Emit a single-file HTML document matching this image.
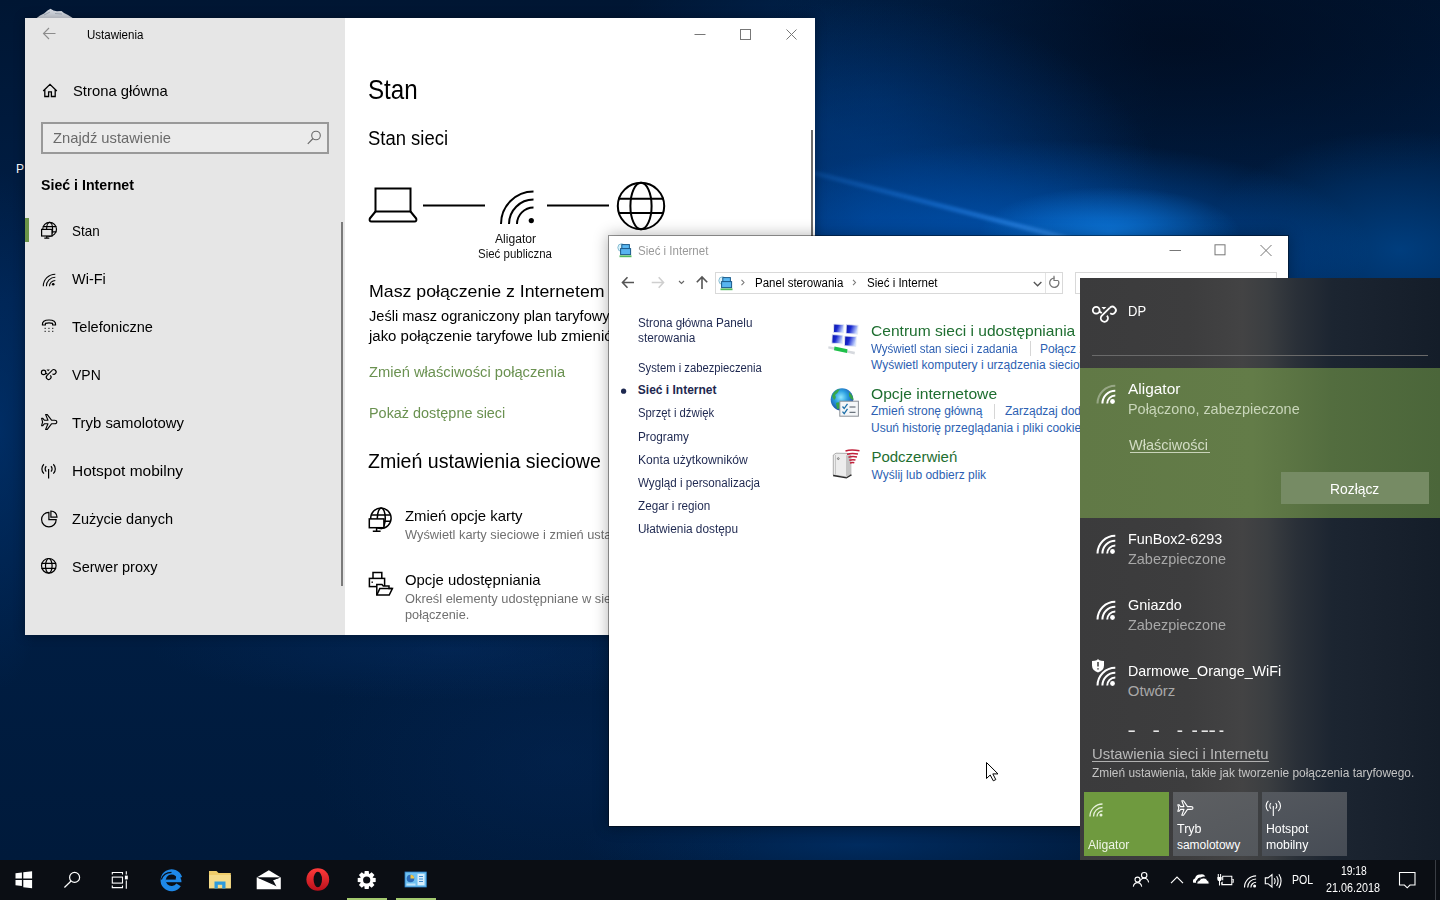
<!DOCTYPE html>
<html><head><meta charset="utf-8"><title>Ustawienia</title>
<style>
*{margin:0;padding:0;box-sizing:border-box}
html,body{width:1440px;height:900px;overflow:hidden}
body{position:relative;font-family:"Liberation Sans",sans-serif;background:#021632}
.t{position:absolute;white-space:nowrap;line-height:1;transform-origin:0 0}
.abs{position:absolute;display:block}
#wall{position:absolute;left:0;top:0;width:1440px;height:860px;overflow:hidden;
 background:
  radial-gradient(ellipse 130px 45px at 1110px 232px, rgba(15,130,235,0.75), rgba(15,130,235,0) 100%),
  radial-gradient(ellipse 330px 110px at 1040px 250px, rgba(0,95,200,0.8), rgba(0,95,200,0) 100%),
  radial-gradient(ellipse 300px 220px at 870px 220px, rgba(0,72,160,0.6), rgba(0,72,160,0) 100%),
  radial-gradient(ellipse 200px 120px at 1400px 250px, rgba(0,78,155,0.65), rgba(0,78,155,0) 100%),
  radial-gradient(ellipse 420px 160px at 1180px 40px, rgba(1,10,28,0.7), rgba(1,10,28,0) 100%),
  radial-gradient(ellipse 280px 220px at 880px 100px, rgba(0,55,120,0.55), rgba(0,55,120,0) 100%),
  radial-gradient(ellipse 300px 50px at 450px 650px, rgba(6,50,110,0.35), rgba(6,50,110,0) 100%),
  radial-gradient(ellipse 250px 150px at 560px 760px, rgba(4,40,90,0.4), rgba(4,40,90,0) 100%),
  radial-gradient(ellipse 60px 260px at 0px 430px, rgba(0,62,135,0.45), rgba(0,62,135,0) 100%),
  radial-gradient(ellipse 280px 45px at 860px 845px, rgba(0,60,130,0.5), rgba(0,60,130,0) 100%),
  linear-gradient(180deg,#001633 0%,#00204a 35%,#001e44 65%,#001a3b 100%);}
#beam1{position:absolute;left:812px;top:170px;width:270px;height:5px;transform:rotate(14.5deg);transform-origin:0 50%;background:linear-gradient(90deg,rgba(40,140,250,.15) 0%,rgba(40,140,250,.4) 50%,rgba(70,160,255,.55) 100%);filter:blur(1.5px)}
#set{position:absolute;left:25px;top:18px;width:790px;height:617px;background:#fff;overflow:hidden;box-shadow:0 0 10px rgba(0,0,0,.35)}
#cp{position:absolute;left:608px;top:235px;width:681px;height:592px;background:#fff;overflow:hidden;border:1px solid rgba(0,0,0,.38);background-clip:padding-box;box-shadow:0 0 14px rgba(0,0,0,.3)}
#fly{position:absolute;left:1080px;top:278px;width:360px;height:582px;overflow:hidden;
 background:linear-gradient(90deg,#3b3b3c 0%,#3d3d3e 30%,#434344 45%,#3b3e41 52%,#2a3038 60%,#1c2531 70%,#141d29 100%)}
#task{position:absolute;left:0;top:860px;width:1440px;height:40px;background:#0b0e14;overflow:hidden}
svg.abs{overflow:visible}

</style></head><body>
<div id="wall"><div id="beam1"></div></div>
<svg class="abs" style="left:33px;top:6px;" width="44" height="14" viewBox="33 6 44 14"><path d="M36 18.5 L40 15.5 L44 13.5 L47.5 10.5 L50.5 8.8 L53.5 10.5 L57 11.2 L61.5 11 L64 13 L68 15 L73.5 18.5 Z" fill="#d3d8e0"/><path d="M44 15 L50 12 M55 13.5 L62 14" stroke="#9aa4b2" stroke-width="0.8"/></svg>
<div class="t" id="x1" style="left:16.0px;top:162.5px;font-size:12px;color:#fff;">P</div>
<div id="set">
<div class="abs" style="left:0px;top:0px;width:320px;height:617px;background:#e6e6e6"></div>
<svg class="abs" style="left:15px;top:8px;" width="20" height="16" viewBox="40 26 20 16"><path d="M43.5 33.5 H55.5 M49 28 L43.5 33.5 L49 39" fill="none" stroke="#8c8c8c" stroke-width="1.1"/></svg>
<svg class="abs" style="left:15px;top:62px;" width="20" height="20" viewBox="40 80 20 20"><path d="M43.2 91 L50 84.3 L56.8 91 M44.8 89.5 V96.5 H48.6 V91.8 H51.4 V96.5 H55.2 V89.5" fill="none" stroke="#000" stroke-width="1.3" stroke-linejoin="miter"/></svg>
<div class="abs" style="left:16px;top:104px;width:288px;height:32px;border:2px solid #999;background:#ebebeb"></div>
<svg class="abs" style="left:279px;top:110px;" width="20" height="20" viewBox="304 128 20 20"><circle cx="316" cy="135.5" r="4.3" fill="none" stroke="#6a6a6a" stroke-width="1.1"/><path d="M313 138.5 L307.8 143.8" stroke="#6a6a6a" stroke-width="1.2"/></svg>
<div class="abs" style="left:0px;top:200px;width:4px;height:24px;background:#6b9448"></div>
<svg class="abs" style="left:15px;top:203px;" width="18" height="18" viewBox="40 221 18 18"><circle cx="49.6" cy="229.2" r="6.9" fill="none" stroke="#000" stroke-width="1.2"/><ellipse cx="49.6" cy="229.2" rx="3" ry="6.9" fill="none" stroke="#000" stroke-width="1.2"/><path d="M42.8 226.6 H56.4 M42.8 231.8 H56.4" fill="none" stroke="#000" stroke-width="1.2"/><rect x="41.6" y="229.4" width="10.4" height="6.6" fill="#e6e6e6" stroke="#000" stroke-width="1.2"/><path d="M46.8 236 V238 M44.3 238.2 H49.3" fill="none" stroke="#000" stroke-width="1.2"/></svg>
<svg class="abs" style="left:15px;top:252px;" width="18" height="18" viewBox="40 270 18 18"><path d="M43.3 286.2 A12 12 0 0 1 55.3 274.2 M46.4 286.2 A8.9 8.9 0 0 1 55.3 277.3 M49.5 286.2 A5.8 5.8 0 0 1 55.3 280.4" fill="none" stroke="#000" stroke-width="1.05"/><circle cx="53.2" cy="284.3" r="1.3" fill="#000"/></svg>
<svg class="abs" style="left:15px;top:300px;" width="18" height="18" viewBox="40 318 18 18"><path d="M42.4 325 Q42 320 49 320 Q56 320 55.6 325 H52.6 V323.4 Q49 322.4 45.4 323.4 V325 Z" fill="none" stroke="#000" stroke-width="1.2" stroke-linejoin="round"/><g fill="#000"><rect x="44.6" y="327.8" width="1.1" height="1.1"/><rect x="48.4" y="327.8" width="1.1" height="1.1"/><rect x="52.2" y="327.8" width="1.1" height="1.1"/><rect x="44.6" y="330.8" width="1.1" height="1.1"/><rect x="48.4" y="330.8" width="1.1" height="1.1"/><rect x="52.2" y="330.8" width="1.1" height="1.1"/></g></svg>
<svg class="abs" style="left:15px;top:348px;" width="18" height="18" viewBox="40 366 18 18"><g fill="none" stroke="#000" stroke-width="1.15"><circle cx="43.6" cy="372.4" r="2.2"/><path d="M45.7 373.2 L47.4 374.1"/><path d="M52.1 370.3 A2.35 2.35 0 1 1 52.4 373.9"/><path d="M52.1 370.3 L46.9 375.6 A2.35 2.35 0 1 0 50.3 375.4"/></g><path d="M46.5 369.5 H49.9 L48.2 371.3 Z" fill="#000"/></svg>
<svg class="abs" style="left:15px;top:395px;" width="18" height="18" viewBox="40 413 18 18"><path d="M56.8 422 Q56.8 420.2 54.5 420.2 H51.5 L47.3 414.6 H45.6 L48 420.2 H44.3 L42.8 418.3 H41.6 L42.6 422 L41.6 425.7 H42.8 L44.3 423.8 H48 L45.6 429.4 H47.3 L51.5 423.8 H54.5 Q56.8 423.8 56.8 422 Z" fill="none" stroke="#000" stroke-width="1.1" stroke-linejoin="round"/></svg>
<svg class="abs" style="left:15px;top:443px;" width="18" height="18" viewBox="40 461 18 18"><path d="M48.6 469 V478.5" fill="none" stroke="#000" stroke-width="1.2"/><path d="M46.3 466.3 A3.5 3.5 0 0 0 46.3 471.5 M50.9 466.3 A3.5 3.5 0 0 1 50.9 471.5 M43.9 464.2 A6.5 6.5 0 0 0 43.9 473.6 M53.3 464.2 A6.5 6.5 0 0 1 53.3 473.6" fill="none" stroke="#000" stroke-width="1.2"/></svg>
<svg class="abs" style="left:15px;top:490px;" width="18" height="18" viewBox="40 508 18 18"><path d="M48.9 512.3 A7.3 7.3 0 1 0 56.2 519.6 H48.9 Z" fill="none" stroke="#000" stroke-width="1.2"/><path d="M50.9 511 A6.1 6.1 0 0 1 57 517.1 H50.9 Z" fill="none" stroke="#000" stroke-width="1.2"/></svg>
<svg class="abs" style="left:15px;top:539px;" width="18" height="18" viewBox="40 557 18 18"><circle cx="48.8" cy="565.8" r="7.3" fill="none" stroke="#000" stroke-width="1.2"/><ellipse cx="48.8" cy="565.8" rx="3.3" ry="7.3" fill="none" stroke="#000" stroke-width="1.2"/><path d="M41.5 563.3 H56.1 M41.5 568.3 H56.1" fill="none" stroke="#000" stroke-width="1.2"/></svg>
<div class="abs" style="left:316px;top:204px;width:2px;height:364px;background:#7a7a7a"></div>
<svg class="abs" style="left:665px;top:8px;" width="110" height="18" viewBox="690 26 110 18"><path d="M694.5 34.5 H705.5" stroke="#777" stroke-width="1"/><rect x="740.5" y="29.5" width="10" height="10" fill="none" stroke="#777" stroke-width="1"/><path d="M786.5 29.5 L796.5 39.5 M796.5 29.5 L786.5 39.5" stroke="#777" stroke-width="1"/></svg>
<svg class="abs" style="left:340px;top:160px;" width="310" height="56" viewBox="365 178 310 56"><rect x="375.5" y="188.5" width="35" height="23" fill="none" stroke="#000" stroke-width="2"/><path d="M375.5 211.5 L369.8 218.5 Q369 221.5 371.5 221.5 H414.5 Q417 221.5 416.2 218.5 L410.5 211.5" fill="none" stroke="#000" stroke-width="2" stroke-linejoin="round"/><path d="M423 205.5 H485 M547 205.5 H609" fill="none" stroke="#000" stroke-width="2"/><path d="M501 224 A32.5 32.5 0 0 1 533.5 191.5 M509 224 A24.5 24.5 0 0 1 533.5 199.5 M517 224 A16.5 16.5 0 0 1 533.5 207.5" fill="none" stroke="#000" stroke-width="2"/><circle cx="531.3" cy="220.6" r="2.6" fill="#000"/><circle cx="641" cy="206" r="23.2" fill="none" stroke="#000" stroke-width="2"/><ellipse cx="641" cy="206" rx="10.6" ry="23.2" fill="none" stroke="#000" stroke-width="2"/><path d="M618 198.8 H664 M618 213 H664" fill="none" stroke="#000" stroke-width="2"/></svg>
<svg class="abs" style="left:341px;top:487px;" width="30" height="30" viewBox="366 505 30 30"><g fill="none" stroke="#000" stroke-width="1.5"><circle cx="380.9" cy="518.3" r="10.2"/><ellipse cx="381.3" cy="518.3" rx="4" ry="10.2"/><path d="M371 515 H391 M371 521.2 H391"/></g><rect x="369.3" y="518.9" width="14.6" height="8.8" fill="#fff" stroke="#000" stroke-width="1.5"/><path d="M376.6 527.7 V531 M372.8 531.2 H380.6" fill="none" stroke="#000" stroke-width="1.5"/></svg>
<svg class="abs" style="left:341px;top:551px;" width="30" height="30" viewBox="366 569 30 30"><g fill="none" stroke="#000" stroke-width="1.5" stroke-linejoin="miter"><path d="M373 578.3 V572.4 H381.8 V578.3"/><rect x="369.4" y="578.4" width="15.2" height="8.2"/></g><rect x="371.5" y="581.5" width="1.4" height="1.4" fill="#000"/><path d="M376.8 595 V584.5 H382 L383.3 586 H389 V588.6 H392.4 L389.2 595 Z" fill="#fff" stroke="#000" stroke-width="1.5" stroke-linejoin="miter"/><path d="M376.8 595 L379.8 588.6 H392.4" fill="none" stroke="#000" stroke-width="1.5"/></svg>
<div class="abs" style="left:786px;top:112px;width:2px;height:505px;background:#6e6e6e"></div>
<div class="t" id="x2" style="left:61.7px;top:10.7px;font-size:12px;color:#000;transform:scaleX(0.961);">Ustawienia</div>
<div class="t" id="x3" style="left:48.1px;top:65.2px;font-size:15px;color:#000;transform:scaleX(0.987);">Strona główna</div>
<div class="t" id="x4" style="left:27.5px;top:112.3px;font-size:15px;color:#6a6a6a;transform:scaleX(0.983);">Znajdź ustawienie</div>
<div class="t" id="x5" style="left:15.8px;top:158.6px;font-size:15px;color:#000;font-weight:bold;transform:scaleX(0.945);">Sieć i Internet</div>
<div class="t" id="x6" style="left:47.1px;top:205.2px;font-size:15px;color:#000;transform:scaleX(0.894);">Stan</div>
<div class="t" id="x7" style="left:47.1px;top:253.2px;font-size:15px;color:#000;transform:scaleX(0.966);">Wi-Fi</div>
<div class="t" id="x8" style="left:47.1px;top:301.2px;font-size:15px;color:#000;transform:scaleX(0.971);">Telefoniczne</div>
<div class="t" id="x9" style="left:47.1px;top:349.2px;font-size:15px;color:#000;transform:scaleX(0.932);">VPN</div>
<div class="t" id="x10" style="left:47.1px;top:397.2px;font-size:15px;color:#000;transform:scaleX(0.993);">Tryb samolotowy</div>
<div class="t" id="x11" style="left:47.1px;top:445.2px;font-size:15px;color:#000;transform:scaleX(1.032);">Hotspot mobilny</div>
<div class="t" id="x12" style="left:47.1px;top:493.2px;font-size:15px;color:#000;transform:scaleX(0.969);">Zużycie danych</div>
<div class="t" id="x13" style="left:47.1px;top:541.2px;font-size:15px;color:#000;transform:scaleX(0.968);">Serwer proxy</div>
<div class="t" id="x14" style="left:342.8px;top:58.1px;font-size:28px;color:#000;transform:scaleX(0.863);">Stan</div>
<div class="t" id="x15" style="left:342.8px;top:110.1px;font-size:20px;color:#000;transform:scaleX(0.923);">Stan sieci</div>
<div class="t" id="x16" style="left:470.1px;top:215.1px;font-size:12px;color:#111;transform:scaleX(1.008);">Aligator</div>
<div class="t" id="x17" style="left:453.4px;top:230.2px;font-size:12px;color:#111;transform:scaleX(0.956);">Sieć publiczna</div>
<div class="t" id="x18" style="left:343.5px;top:264.6px;font-size:17px;color:#000;transform:scaleX(1.043);">Masz połączenie z Internetem</div>
<div class="t" id="x19" style="left:343.5px;top:290.6px;font-size:14px;color:#000;transform:scaleX(1.041);">Jeśli masz ograniczony plan taryfowy danych, możesz ustawić tę sieć</div>
<div class="t" id="x20" style="left:343.5px;top:311.1px;font-size:14px;color:#000;transform:scaleX(1.068);">jako połączenie taryfowe lub zmienić inne właściwości.</div>
<div class="t" id="x21" style="left:343.5px;top:347.1px;font-size:14px;color:#6a9150;transform:scaleX(1.050);">Zmień właściwości połączenia</div>
<div class="t" id="x22" style="left:343.5px;top:387.7px;font-size:14px;color:#6a9150;transform:scaleX(1.030);">Pokaż dostępne sieci</div>
<div class="t" id="x23" style="left:343.4px;top:433.1px;font-size:20px;color:#000;transform:scaleX(0.979);">Zmień ustawienia sieciowe</div>
<div class="t" id="x24" style="left:379.9px;top:489.5px;font-size:15px;color:#000;transform:scaleX(0.993);">Zmień opcje karty</div>
<div class="t" id="x25" style="left:379.9px;top:509.8px;font-size:13px;color:#707070;transform:scaleX(0.986);">Wyświetl karty sieciowe i zmień ustawienia połączenia.</div>
<div class="t" id="x26" style="left:379.9px;top:553.5px;font-size:15px;color:#000;transform:scaleX(0.991);">Opcje udostępniania</div>
<div class="t" id="x27" style="left:379.9px;top:573.5px;font-size:13px;color:#707070;transform:scaleX(0.987);">Określ elementy udostępniane w sieciach, z którymi masz</div>
<div class="t" id="x28" style="left:379.9px;top:590.4px;font-size:13px;color:#707070;transform:scaleX(0.977);">połączenie.</div>
</div>
<div id="cp">
<svg class="abs" style="left:8px;top:6px;" width="16" height="16" viewBox="0 0 16 16"><circle cx="4.6" cy="5.6" r="3.8" fill="#d8f2fb" stroke="#7fb8cf" stroke-width="0.9"/><rect x="4.8" y="2.6" width="7.6" height="4.2" fill="#5ab8f2" stroke="#1b5a8a" stroke-width="1"/><rect x="3.6" y="6.6" width="10" height="6" fill="#58b4f0" stroke="#1b5a8a" stroke-width="1"/><rect x="2.5" y="13.4" width="12" height="1.8" fill="#3fb04a" opacity="0.9"/></svg>
<svg class="abs" style="left:556px;top:4px;" width="112" height="20" viewBox="1165 240 112 20"><path d="M1169.5 250.5 H1181" stroke="#777" stroke-width="1"/><rect x="1215" y="244.8" width="10" height="10" fill="none" stroke="#777" stroke-width="1"/><path d="M1260.5 245 L1271.5 256 M1271.5 245 L1260.5 256" stroke="#777" stroke-width="1"/></svg>
<svg class="abs" style="left:9px;top:38px;" width="95" height="18" viewBox="618 274 95 18"><path d="M622.5 282.5 H634 M627.5 277.3 L622.5 282.5 L627.5 287.7" fill="none" stroke="#555" stroke-width="1.6"/><path d="M651.7 282.5 H663.5 M658.7 277.3 L663.5 282.5 L658.7 287.7" fill="none" stroke="#cfcfcf" stroke-width="1.6"/><path d="M679 281 L681.5 283.5 L684 281" fill="none" stroke="#666" stroke-width="1.1"/><path d="M702 277 V289 M696.8 282.2 L702 277 L707.2 282.2" fill="none" stroke="#555" stroke-width="1.6"/></svg>
<div class="abs" style="left:106px;top:36px;width:348px;height:22px;border:1px solid #d9d9d9"></div>
<div class="abs" style="left:436px;top:37px;width:1px;height:20px;background:#e3e3e3"></div>
<svg class="abs" style="left:109px;top:38.5px;" width="16" height="16" viewBox="0 0 16 16"><circle cx="4.6" cy="5.6" r="3.8" fill="#d8f2fb" stroke="#7fb8cf" stroke-width="0.9"/><rect x="4.8" y="2.6" width="7.6" height="4.2" fill="#5ab8f2" stroke="#1b5a8a" stroke-width="1"/><rect x="3.6" y="6.6" width="10" height="6" fill="#58b4f0" stroke="#1b5a8a" stroke-width="1"/><rect x="2.5" y="13.4" width="12" height="1.8" fill="#3fb04a" opacity="0.9"/></svg>
<svg class="abs" style="left:129px;top:40px;" width="125" height="14" viewBox="738 276 125 14"><path d="M741.5 279.8 L744 282.5 L741.5 285.2 M853 279.8 L855.5 282.5 L853 285.2" fill="none" stroke="#777" stroke-width="1.1"/></svg>
<svg class="abs" style="left:421px;top:40px;" width="34" height="16" viewBox="1030 276 34 16"><path d="M1033.8 282 L1037.6 285.8 L1041.4 282" fill="none" stroke="#555" stroke-width="1.3"/><path d="M1058.5 281 A4.6 4.6 0 1 1 1054.6 278.2" fill="none" stroke="#777" stroke-width="1.3"/><path d="M1054 275.8 V280.5 H1058.5" fill="none" stroke="#777" stroke-width="1.2"/></svg>
<div class="abs" style="left:466px;top:36px;width:202px;height:22px;border:1px solid #d9d9d9"></div>
<svg class="abs" style="left:10px;top:151px;" width="9" height="9" viewBox="619 387 9 9"><circle cx="623.6" cy="391.2" r="2.6" fill="#1e2850"/></svg>
<div class="abs" style="left:420.5px;top:105px;width:1px;height:15px;background:#d6d6d6"></div>
<div class="abs" style="left:384.5px;top:168px;width:1px;height:15px;background:#d6d6d6"></div>
<svg class="abs" style="left:217px;top:85px;" width="36" height="36" viewBox="826 321 36 36">
<defs><linearGradient id="scr" x1="0" y1="0" x2="1" y2="0.3"><stop offset="0" stop-color="#0a14a0"/><stop offset="0.45" stop-color="#1a2ad0"/><stop offset="1" stop-color="#c8d8ff"/></linearGradient></defs>
<g stroke="#e8ecf5" stroke-width="0.9">
<polygon points="833.8,324 844,324.6 843.6,333 833.4,332.6" fill="url(#scr)"/>
<polygon points="846.3,324.6 858.2,325.2 857.6,334.2 846,333.6" fill="url(#scr)"/>
<polygon points="832.2,334.6 843,335.2 842.6,343.8 831.8,343.2" fill="url(#scr)"/>
<polygon points="844.8,336 856.4,336.6 855.8,346.4 844.4,345.8" fill="url(#scr)"/>
</g>
<path d="M828.5 346.2 L834.5 347.2 L847 350.2 L855 351.8 L854.5 354.4 L846.5 352.6 L834 349.8 L828.2 348.6 Z" fill="#d6d9de"/>
<path d="M834.5 346.6 L847.5 349.2 L847 353 L834 350.2 Z" fill="#1fc04a"/>
</svg>
<svg class="abs" style="left:217px;top:148px;" width="36" height="36" viewBox="826 384 36 36">
<defs><radialGradient id="glb" cx="0.45" cy="0.4" r="0.65"><stop offset="0" stop-color="#8fe8ff"/><stop offset="0.45" stop-color="#2a9ee0"/><stop offset="1" stop-color="#1a3f9a"/></radialGradient></defs>
<circle cx="842" cy="399.5" r="11.3" fill="url(#glb)"/>
<path d="M832 396 Q834 390 840 389 Q838 393 835 395 Q837 398 834 400 Z M836 403 Q840 401 842 405 Q840 409 837 409 Z M849 392 Q853 395 853.5 400 Q850 399 849 396 Z" fill="#3aa83a" opacity="0.9"/>
<rect x="839.8" y="401.2" width="18.6" height="15" fill="#f4f6f8" stroke="#8a8f96" stroke-width="1"/>
<path d="M842.5 406.5 L844.2 408.5 L847.5 403.8 M842.5 411.6 L844.2 413.6 L847.5 408.9" fill="none" stroke="#1d6fa8" stroke-width="1.3"/>
<path d="M849.5 407 H855.5 M849.5 412.3 H855.5" stroke="#4a5560" stroke-width="1"/>
</svg>
<svg class="abs" style="left:219px;top:210px;" width="36" height="36" viewBox="828 446 36 36">
<path d="M833.3 455 L836 453.2 L847 453.4 L850.8 455.5 L850.8 474.5 L846.5 477 L833.3 475 Z" fill="#ececec" stroke="#9a9a9a" stroke-width="0.8"/>
<path d="M846 455.3 L850.8 455.5 L850.8 474.5 L846 476.5 Z" fill="#c4c4c4"/>
<path d="M835.5 455 V474.5" stroke="#bdbdbd" stroke-width="0.8"/>
<path d="M833.3 474.8 L846.5 477.2 L851 474.3 L852 475.3 L846.5 478.4 L833 476.2 Z" fill="#2a2a2a"/>
<circle cx="838.3" cy="458.6" r="0.9" fill="none" stroke="#555" stroke-width="0.7"/>
<g fill="none" stroke="#c0203a" stroke-width="1.5"><path d="M845.5 451 Q851 449.2 859.5 450.8"/><path d="M847 454.2 Q852 452.7 858 454"/><path d="M848.5 457.2 Q852.5 456 857 457"/><path d="M849.3 460.2 Q852.6 459.2 855.5 460"/><path d="M850 463 Q852.4 462.3 854.3 462.8"/></g>
</svg>
<svg class="abs" style="left:375px;top:524px;" width="18" height="24" viewBox="984 760 18 24"><path d="M986.5 762.5 V778.5 L990.2 775 L993.3 780.8 L995.8 779.6 L992.8 773.9 H998 Z" fill="#fff" stroke="#000" stroke-width="1" stroke-linejoin="round"/></svg>
<div class="t" id="x29" style="left:29.0px;top:8.8px;font-size:12px;color:#999;transform:scaleX(0.959);">Sieć i Internet</div>
<div class="t" id="x30" style="left:145.5px;top:40.7px;font-size:12px;color:#000;transform:scaleX(0.959);">Panel sterowania</div>
<div class="t" id="x31" style="left:257.5px;top:40.7px;font-size:12px;color:#000;transform:scaleX(0.961);">Sieć i Internet</div>
<div class="t" id="x32" style="left:28.8px;top:81.0px;font-size:12px;color:#1e2850;transform:scaleX(0.975);">Strona główna Panelu</div>
<div class="t" id="x33" style="left:28.8px;top:95.7px;font-size:12px;color:#1e2850;transform:scaleX(0.987);">sterowania</div>
<div class="t" id="x34" style="left:28.8px;top:125.5px;font-size:12px;color:#1e2850;transform:scaleX(0.938);">System i zabezpieczenia</div>
<div class="t" id="x35" style="left:28.8px;top:148.2px;font-size:12px;color:#1e2850;font-weight:bold;">Sieć i Internet</div>
<div class="t" id="x36" style="left:28.8px;top:171.4px;font-size:12px;color:#1e2850;transform:scaleX(0.944);">Sprzęt i dźwięk</div>
<div class="t" id="x37" style="left:28.8px;top:194.5px;font-size:12px;color:#1e2850;transform:scaleX(0.980);">Programy</div>
<div class="t" id="x38" style="left:28.8px;top:217.6px;font-size:12px;color:#1e2850;transform:scaleX(1.009);">Konta użytkowników</div>
<div class="t" id="x39" style="left:28.8px;top:240.7px;font-size:12px;color:#1e2850;transform:scaleX(0.969);">Wygląd i personalizacja</div>
<div class="t" id="x40" style="left:28.8px;top:263.8px;font-size:12px;color:#1e2850;transform:scaleX(0.975);">Zegar i region</div>
<div class="t" id="x41" style="left:28.8px;top:286.8px;font-size:12px;color:#1e2850;transform:scaleX(0.986);">Ułatwienia dostępu</div>
<div class="t" id="x42" style="left:262.0px;top:86.5px;font-size:15px;color:#1e6e30;transform:scaleX(1.038);">Centrum sieci i udostępniania</div>
<div class="t" id="x43" style="left:262.0px;top:106.5px;font-size:12px;color:#2d5fb2;transform:scaleX(0.963);">Wyświetl stan sieci i zadania</div>
<div class="t" id="x44" style="left:431.0px;top:106.5px;font-size:12px;color:#2d5fb2;">Połącz z siecią</div>
<div class="t" id="x45" style="left:262.0px;top:123.1px;font-size:12px;color:#2d5fb2;">Wyświetl komputery i urządzenia sieciowe</div>
<div class="t" id="x46" style="left:262.0px;top:149.5px;font-size:15px;color:#1e6e30;transform:scaleX(1.043);">Opcje internetowe</div>
<div class="t" id="x47" style="left:262.0px;top:169.1px;font-size:12px;color:#2d5fb2;">Zmień stronę główną</div>
<div class="t" id="x48" style="left:396.0px;top:169.1px;font-size:12px;color:#2d5fb2;">Zarządzaj dodatkami przeglądarki</div>
<div class="t" id="x49" style="left:262.0px;top:185.7px;font-size:12px;color:#2d5fb2;">Usuń historię przeglądania i pliki cookie</div>
<div class="t" id="x50" style="left:262.4px;top:213.2px;font-size:15px;color:#1e6e30;">Podczerwień</div>
<div class="t" id="x51" style="left:262.5px;top:232.6px;font-size:12px;color:#2d5fb2;">Wyślij lub odbierz plik</div>
</div>
<div id="fly">
<svg class="abs" style="left:10px;top:25px;" width="28" height="22" viewBox="1090 303 28 22"><g fill="none" stroke="#fff" stroke-width="1.8"><circle cx="1096.2" cy="310.3" r="3.4"/><path d="M1099.4 311.6 L1101.8 313"/><path d="M1109.7 307.8 A3.6 3.6 0 1 1 1110.2 313.3"/><path d="M1109.7 307.8 L1101.6 315.9 A3.6 3.6 0 1 0 1106.9 315.6"/></g><path d="M1101.4 306.9 H1106.4 L1103.9 309.5 Z" fill="#fff"/></svg>
<div class="abs" style="left:12px;top:77px;width:336px;height:1px;background:#6a6a6a"></div>
<div class="abs" style="left:0px;top:90px;width:360px;height:149.5px;background:linear-gradient(90deg,#617946 0%,#637c48 48%,#5c7544 58%,#536d3f 70%,#4b663a 100%)"></div>
<svg class="abs" style="left:14px;top:105px;" width="24" height="24" viewBox="1094 383 24 24"><path d="M1097.50 403.60 A17.8 17.8 0 0 1 1115.30 385.80" fill="none" stroke="#fff" stroke-width="2.0" opacity="0.35"/><path d="M1102.40 403.60 A12.9 12.9 0 0 1 1115.30 390.70" fill="none" stroke="#fff" stroke-width="2.0" opacity="1"/><path d="M1107.20 403.60 A8.1 8.1 0 0 1 1115.30 395.50" fill="none" stroke="#fff" stroke-width="2.0" opacity="1"/><circle cx="1112.50" cy="401.50" r="2.4" fill="#fff"/></svg>
<div class="abs" style="left:50px;top:174px;width:80px;height:1px;background:#c9d4ba"></div>
<div class="abs" style="left:201px;top:194px;width:148px;height:32px;background:#768b64"></div>
<svg class="abs" style="left:13.5px;top:255px;" width="24" height="24" viewBox="1093.5 533 24 24"><path d="M1097.00 553.60 A17.8 17.8 0 0 1 1114.80 535.80" fill="none" stroke="#fff" stroke-width="2.0" opacity="1"/><path d="M1101.90 553.60 A12.9 12.9 0 0 1 1114.80 540.70" fill="none" stroke="#fff" stroke-width="2.0" opacity="1"/><path d="M1106.70 553.60 A8.1 8.1 0 0 1 1114.80 545.50" fill="none" stroke="#fff" stroke-width="2.0" opacity="1"/><circle cx="1112.00" cy="551.50" r="2.4" fill="#fff"/></svg>
<svg class="abs" style="left:13.5px;top:321px;" width="24" height="24" viewBox="1093.5 599 24 24"><path d="M1097.00 619.60 A17.8 17.8 0 0 1 1114.80 601.80" fill="none" stroke="#fff" stroke-width="2.0" opacity="1"/><path d="M1101.90 619.60 A12.9 12.9 0 0 1 1114.80 606.70" fill="none" stroke="#fff" stroke-width="2.0" opacity="1"/><path d="M1106.70 619.60 A8.1 8.1 0 0 1 1114.80 611.50" fill="none" stroke="#fff" stroke-width="2.0" opacity="1"/><circle cx="1112.00" cy="617.50" r="2.4" fill="#fff"/></svg>
<svg class="abs" style="left:13.5px;top:386.5px;" width="24" height="24" viewBox="1093.5 664.5 24 24"><path d="M1097.00 685.10 A17.8 17.8 0 0 1 1114.80 667.30" fill="none" stroke="#fff" stroke-width="2.0" opacity="1"/><path d="M1101.90 685.10 A12.9 12.9 0 0 1 1114.80 672.20" fill="none" stroke="#fff" stroke-width="2.0" opacity="1"/><path d="M1106.70 685.10 A8.1 8.1 0 0 1 1114.80 677.00" fill="none" stroke="#fff" stroke-width="2.0" opacity="1"/><circle cx="1112.00" cy="683.00" r="2.4" fill="#fff"/></svg>
<svg class="abs" style="left:10px;top:380px;" width="16" height="16" viewBox="1090 658 16 16"><path d="M1092 661 Q1098 660.5 1098 658.8 Q1098 660.5 1104 661 V665.5 Q1104 670.5 1098 672.5 Q1092 670.5 1092 665.5 Z" fill="#fff"/><path d="M1098 662 V666.5 M1098 668.2 V669.6" stroke="#3c3c3d" stroke-width="1.5"/></svg>
<svg class="abs" style="left:40px;top:448px;" width="110" height="10" viewBox="1120 726 110 10"><rect x="1128.5" y="730.4" width="6.3" height="1.6" fill="#e6e6e6"/><rect x="1153.4" y="730.4" width="5.5" height="1.6" fill="#e6e6e6"/><rect x="1177.5" y="730.4" width="4.7" height="1.6" fill="#e6e6e6"/><rect x="1192.3" y="730.4" width="4.7" height="1.6" fill="#e6e6e6"/><rect x="1201.6" y="730.4" width="6.3" height="1.6" fill="#e6e6e6"/><rect x="1209.4" y="730.4" width="5.5" height="1.6" fill="#e6e6e6"/><rect x="1219.5" y="730.4" width="3.9" height="1.6" fill="#e6e6e6"/></svg>
<div class="abs" style="left:12px;top:482.79999999999995px;width:177px;height:1px;background:#b0b0b0"></div>
<div class="abs" style="left:4px;top:514px;width:85px;height:64px;background:#6f9a3f"></div>
<div class="abs" style="left:93px;top:514px;width:85px;height:64px;background:linear-gradient(160deg,#5d5f62,#53575c)"></div>
<div class="abs" style="left:182px;top:514px;width:85px;height:64px;background:linear-gradient(160deg,#54585e,#464c55)"></div>
<svg class="abs" style="left:8px;top:524px;" width="17" height="17" viewBox="1088 802 17 17"><g fill="none" stroke="#e8f2dc" stroke-width="1.3"><path d="M1090 816.5 A12.5 12.5 0 0 1 1102.5 804 M1093.5 816.5 A9 9 0 0 1 1102.5 807.5 M1097 816.5 A5.5 5.5 0 0 1 1102.5 811"/></g><circle cx="1101" cy="815" r="1.5" fill="#e8f2dc"/></svg>
<svg class="abs" style="left:95px;top:520px;" width="20" height="20" viewBox="1175 798 20 20"><path d="M1193 808 Q1193 806.6 1191 806.6 H1187.5 L1183.5 800.8 H1181.8 L1184 806.6 H1180.5 L1179 804.7 H1177.8 L1178.8 808 L1177.8 811.3 H1179 L1180.5 809.4 H1184 L1181.8 815.2 H1183.5 L1187.5 809.4 H1191 Q1193 809.4 1193 808 Z" fill="none" stroke="#fff" stroke-width="1.1" stroke-linejoin="round"/></svg>
<svg class="abs" style="left:183px;top:520px;" width="20" height="20" viewBox="1263 798 20 20"><g fill="none" stroke="#fff" stroke-width="1.1"><path d="M1273.3 806 V816"/><path d="M1271 803.2 A3.6 3.6 0 0 0 1271 808.6 M1275.6 803.2 A3.6 3.6 0 0 1 1275.6 808.6 M1268.4 800.8 A6.8 6.8 0 0 0 1268.4 811 M1278.2 800.8 A6.8 6.8 0 0 1 1278.2 811"/></g></svg>
<div class="t" id="x52" style="left:47.8px;top:25.3px;font-size:15px;color:#fff;transform:scaleX(0.868);">DP</div>
<div class="t" id="x53" style="left:47.8px;top:103.3px;font-size:15px;color:#fff;transform:scaleX(1.030);">Aligator</div>
<div class="t" id="x54" style="left:47.8px;top:122.8px;font-size:15px;color:#c9d6ba;transform:scaleX(0.962);">Połączono, zabezpieczone</div>
<div class="t" id="x55" style="left:49.2px;top:159.2px;font-size:15px;color:#d2dcc4;transform:scaleX(0.967);">Właściwości</div>
<div class="t" id="x56" style="left:249.5px;top:203.3px;font-size:15px;color:#fff;transform:scaleX(0.924);">Rozłącz</div>
<div class="t" id="x57" style="left:47.8px;top:253.1px;font-size:15px;color:#fff;transform:scaleX(0.957);">FunBox2-6293</div>
<div class="t" id="x58" style="left:47.8px;top:273.0px;font-size:15px;color:#a8a8a8;transform:scaleX(0.964);">Zabezpieczone</div>
<div class="t" id="x59" style="left:47.8px;top:319.0px;font-size:15px;color:#fff;transform:scaleX(0.965);">Gniazdo</div>
<div class="t" id="x60" style="left:47.8px;top:338.9px;font-size:15px;color:#a8a8a8;transform:scaleX(0.964);">Zabezpieczone</div>
<div class="t" id="x61" style="left:47.8px;top:385.0px;font-size:15px;color:#fff;transform:scaleX(0.952);">Darmowe_Orange_WiFi</div>
<div class="t" id="x62" style="left:47.8px;top:404.9px;font-size:15px;color:#a8a8a8;">Otwórz</div>
<div class="t" id="x63" style="left:11.5px;top:467.9px;font-size:15px;color:#b9b9b9;transform:scaleX(0.989);">Ustawienia sieci i Internetu</div>
<div class="t" id="x64" style="left:11.5px;top:488.5px;font-size:12px;color:#c4c4c4;transform:scaleX(0.992);">Zmień ustawienia, takie jak tworzenie połączenia taryfowego.</div>
<div class="t" id="x65" style="left:7.8px;top:560.5px;font-size:12px;color:#eef5e6;transform:scaleX(1.015);">Aligator</div>
<div class="t" id="x66" style="left:96.9px;top:544.8px;font-size:12px;color:#fff;transform:scaleX(1.040);">Tryb</div>
<div class="t" id="x67" style="left:96.9px;top:560.6px;font-size:12px;color:#fff;">samolotowy</div>
<div class="t" id="x68" style="left:186.2px;top:544.8px;font-size:12px;color:#fff;transform:scaleX(1.023);">Hotspot</div>
<div class="t" id="x69" style="left:186.2px;top:560.6px;font-size:12px;color:#fff;transform:scaleX(1.023);">mobilny</div>
</div>
<div id="task">
<svg class="abs" style="left:14px;top:10px;" width="20" height="20" viewBox="14 870 20 20"><path d="M15.5 873.2 L21.9 872.4 V878.5 H15.5 Z M23.3 872.2 L32.1 871.2 V878.5 H23.3 Z M15.5 879.9 H21.9 V886.1 L15.5 885.3 Z M23.3 879.9 H32.1 V888.3 L23.3 887.3 Z" fill="#fff"/></svg>
<svg class="abs" style="left:62px;top:10px;" width="20" height="20" viewBox="62 870 20 20"><circle cx="74.6" cy="877.4" r="5" fill="none" stroke="#fff" stroke-width="1.2"/><path d="M71.1 881 L64.4 887.5" stroke="#fff" stroke-width="1.2"/></svg>
<svg class="abs" style="left:110px;top:10px;" width="20" height="20" viewBox="110 870 20 20"><g fill="none" stroke="#fff" stroke-width="1.1"><path d="M112.3 874.6 V872.5 H122.5 V874.6 M112.3 885.5 V887.6 H122.5 V885.5 M126.3 871.2 V874.6 M126.3 880.6 V888.7"/><rect x="112.3" y="877.1" width="10.2" height="6"/></g><rect x="124.9" y="875.6" width="2.9" height="3.8" fill="#fff"/></svg>
<svg class="abs" style="left:158px;top:6px;" width="28" height="28" viewBox="158 866 28 28"><path d="M178.6 884.8 A8.4 8.4 0 1 1 179.6 877.8" fill="none" stroke="#1e88e8" stroke-width="5.2"/><path d="M165.5 879.6 H181.3 V882.2 H165.5 Z" fill="#1e88e8"/><path d="M181.3 882.2 Q181.3 876 177 874 L175.5 879.6 Z" fill="#1e88e8"/><path d="M161.3 879.5 Q163.5 872.5 171.5 872.3" fill="none" stroke="#0b0e14" stroke-width="1.3"/></svg>
<svg class="abs" style="left:207px;top:8px;" width="26" height="24" viewBox="207 868 26 24"><path d="M209 871 H216.5 L218.5 873 H230.8 V888.3 H209 Z" fill="#f0cd6a"/><path d="M209 875 H230.8 V888.3 H209 Z" fill="#f6dc8a"/><path d="M214.5 881.5 H225.5 V888.6 H222.2 V884.8 H217.8 V888.6 H214.5 Z" fill="#2e9bdc"/></svg>
<svg class="abs" style="left:254px;top:8px;" width="28" height="24" viewBox="254 868 28 24"><path d="M256.7 877.5 L268.8 870.2 L280.8 877.5 V889.2 H256.7 Z" fill="#fff"/><path d="M256.7 877.5 L280.8 877.5 L273 880 L276.5 886.5 L268.8 881.3 Z" fill="#0b0e14"/><path d="M257 877.6 L279.5 877.8 L270 881.5 L276 886 Z" fill="#0b0e14"/></svg>
<svg class="abs" style="left:304px;top:6px;" width="28" height="28" viewBox="304 866 28 28"><defs><linearGradient id="op" x1="0" y1="0" x2="0" y2="1"><stop offset="0" stop-color="#ff3b3b"/><stop offset="1" stop-color="#b8101b"/></linearGradient></defs><ellipse cx="317.8" cy="879.5" rx="11.4" ry="11.3" fill="url(#op)"/><ellipse cx="317.8" cy="879.5" rx="4.2" ry="7.8" fill="#0b0e14"/></svg>
<svg class="abs" style="left:355px;top:8px;" width="24" height="24" viewBox="355 868 24 24"><path d="M375.68 877.99 L375.68 882.01 L372.88 882.33 L372.71 882.72 L374.47 884.93 L371.63 887.77 L369.42 886.01 L369.03 886.18 L368.71 888.98 L364.69 888.98 L364.37 886.18 L363.98 886.01 L361.77 887.77 L358.93 884.93 L360.69 882.72 L360.52 882.33 L357.72 882.01 L357.72 877.99 L360.52 877.67 L360.69 877.28 L358.93 875.07 L361.77 872.23 L363.98 873.99 L364.37 873.82 L364.69 871.02 L368.71 871.02 L369.03 873.82 L369.42 873.99 L371.63 872.23 L374.47 875.07 L372.71 877.28 L372.88 877.67 Z" fill="#fff"/><circle cx="366.7" cy="880" r="3.6" fill="#0b0e14"/></svg>
<svg class="abs" style="left:403px;top:9px;" width="26" height="22" viewBox="403 869 26 22"><rect x="405" y="872" width="21.3" height="15" fill="#6ec0f0" stroke="#2b7fc8" stroke-width="0.8"/><circle cx="410.5" cy="878.5" r="3.8" fill="#2a6ab8"/><path d="M410.5 878.5 V874.7 A3.8 3.8 0 0 1 414.3 878.5 Z" fill="#f4c542"/><rect x="417.5" y="873.8" width="7" height="11.5" fill="#d8eefb"/><path d="M419 876.5 H423 M419 879 H423 M419 881.5 H423" stroke="#2b7fc8" stroke-width="0.9"/><rect x="406.5" y="883.5" width="9" height="2" fill="#bfe3f7"/></svg>
<div class="abs" style="left:347px;top:38px;width:40px;height:2px;background:#a3c96f"></div>
<div class="abs" style="left:396px;top:38px;width:40px;height:2px;background:#a3c96f"></div>
<svg class="abs" style="left:1130px;top:14px;transform:translateY(-4.6px)" width="22" height="20" viewBox="1130 874 22 20"><g fill="none" stroke="#fff" stroke-width="1.1"><circle cx="1144.2" cy="879.8" r="2.7"/><path d="M1139.5 887 Q1140.5 882.8 1144.2 882.8 Q1148 882.8 1148.6 887"/><circle cx="1137.5" cy="884.2" r="2.5"/><path d="M1133.3 891.3 Q1134 887.2 1137.5 887.2 Q1141 887.2 1141.7 891.3"/></g></svg>
<svg class="abs" style="left:1168px;top:18px;transform:translateY(-4.6px)" width="18" height="12" viewBox="1168 878 18 12"><path d="M1171 887.7 L1177 881.7 L1183 887.7" fill="none" stroke="#fff" stroke-width="1.2"/></svg>
<svg class="abs" style="left:1190px;top:10px;" width="22" height="18" viewBox="1190 870 22 18"><path d="M1193.2 882.8 Q1192.2 879.5 1195 878.6 Q1196 874.3 1200.2 874.6 Q1203.5 873.2 1205.4 876.5 Q1203 876 1200.8 877.6 Q1198 877 1197 880 Q1195.5 880.8 1196 882.8 Z" fill="#fff"/><path d="M1196.8 884 Q1196.5 880.8 1199.4 880.5 Q1200.6 877.6 1203.6 878.1 Q1206.6 877.4 1207.4 880.6 Q1209.4 880.9 1209.1 884 Z" fill="#fff" stroke="#0b0e14" stroke-width="0.8"/></svg>
<svg class="abs" style="left:1214px;top:11px;" width="22" height="18" viewBox="1214 871 22 18"><g fill="none" stroke="#fff" stroke-width="1.05"><path d="M1222.7 880.2 V876.3 H1231.8 V884.6 H1221.3"/><path d="M1232.3 879.4 H1233.2 V882.2 H1232.3"/><path d="M1218.3 874 V877 M1220.6 874 V877 M1219.5 881 V885.5"/></g><path d="M1217.3 877 H1221.7 V878.6 Q1221.7 881.3 1219.5 881.3 Q1217.3 881.3 1217.3 878.6 Z" fill="#fff"/><path d="M1220.8 883.8 Q1221 881.8 1222.7 881.6 V884 Z" fill="#fff"/></svg>
<svg class="abs" style="left:1242px;top:18px;transform:translateY(-4.6px)" width="18" height="16" viewBox="1242 878 18 16"><g fill="none" stroke="#fff" stroke-width="1.15"><path d="M1244.5 892 A11.6 11.6 0 0 1 1256.1 880.4 M1247.7 892 A8.4 8.4 0 0 1 1256.1 883.6 M1250.9 892 A5.2 5.2 0 0 1 1256.1 886.8"/></g><circle cx="1254.6" cy="890.5" r="1.5" fill="#fff"/></svg>
<svg class="abs" style="left:1262px;top:16px;transform:translateY(-4.6px)" width="22" height="18" viewBox="1262 876 22 18"><g fill="none" stroke="#fff" stroke-width="1.1"><path d="M1265.3 882.5 H1268 L1272 879.2 V891.6 L1268 888.3 H1265.3 Z M1274.3 882.8 Q1276 885.5 1274.3 888.6 M1276.6 880.8 Q1279.6 885.6 1276.6 890.6 M1278.9 878.9 Q1283.2 885.6 1278.9 892.5"/></g></svg>
<svg class="abs" style="left:1396px;top:10px;" width="22" height="20" viewBox="1396 870 22 20"><path d="M1399.5 872.5 H1415 V885 H1410 L1407.2 887.8 L1404.4 885 H1399.5 Z" fill="none" stroke="#fff" stroke-width="1.1"/></svg>
<div class="abs" style="left:1435px;top:0px;width:1px;height:40px;background:#3a3d44"></div>
<div class="t" id="x70" style="left:1291.7px;top:13.5px;font-size:12px;color:#fff;transform:scaleX(0.879);">POL</div>
<div class="t" id="x71" style="left:1340.5px;top:4.6px;font-size:12px;color:#fff;transform:scaleX(0.856);">19:18</div>
<div class="t" id="x72" style="left:1326.2px;top:22.4px;font-size:12px;color:#fff;transform:scaleX(0.897);">21.06.2018</div>
</div>
</body></html>
